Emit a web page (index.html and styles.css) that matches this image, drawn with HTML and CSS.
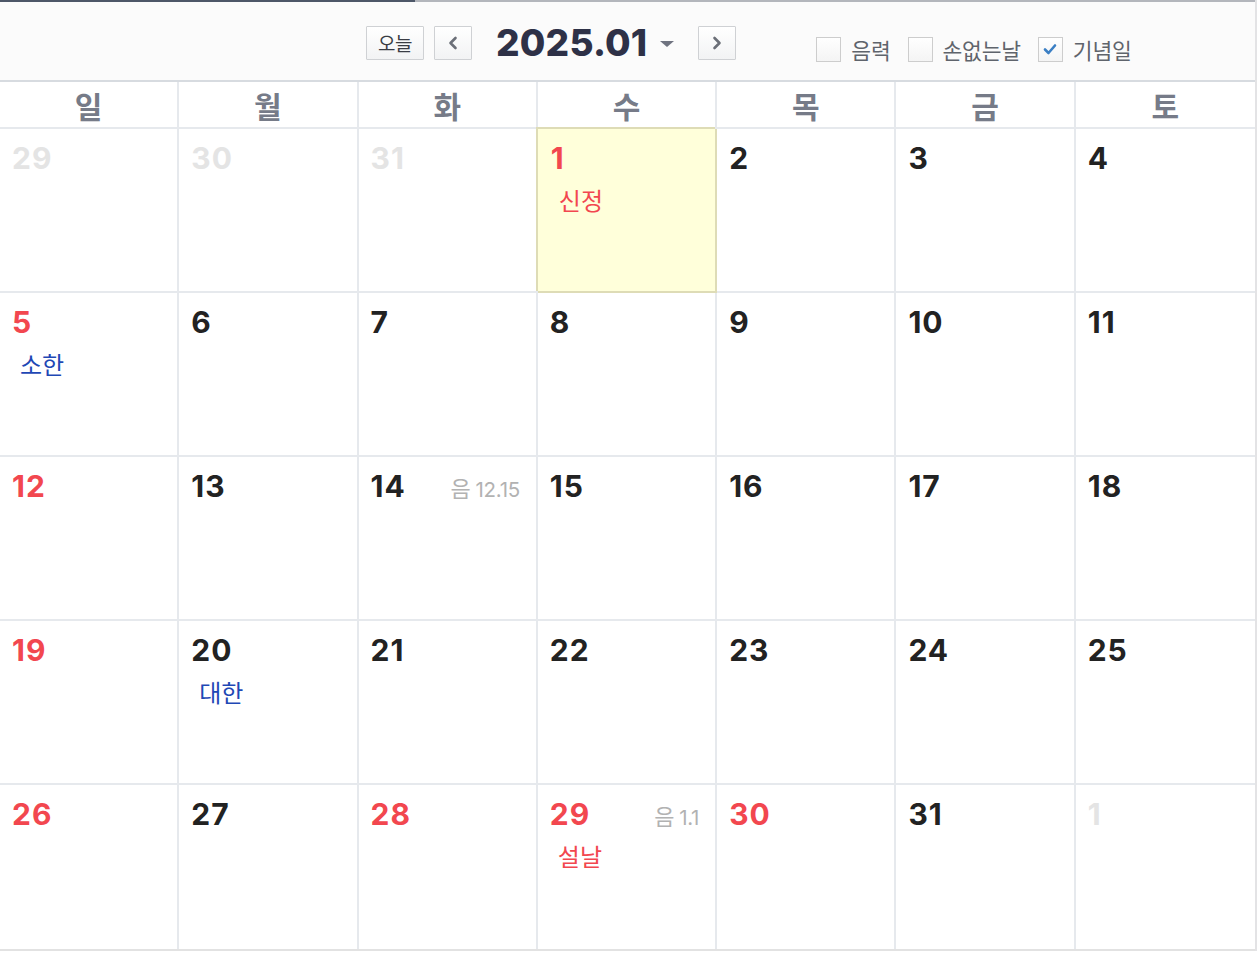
FILE: index.html
```html
<!DOCTYPE html>
<html lang="ko">
<head>
<meta charset="utf-8">
<title>2025.01</title>
<link rel="stylesheet" href="styles.css">
</head>
<body>
<div class="cal">
  <div class="topline"></div>
  <div class="header">
    <div class="nav">
      <button class="btn today-btn">오늘</button>
      <button class="btn arrow" aria-label="이전">
        <svg width="14" height="16" viewBox="0 0 14 16"><path d="M9.5 3 L4.5 8 L9.5 13" fill="none" stroke="#6b6f78" stroke-width="2.6" stroke-linecap="round" stroke-linejoin="round"/></svg>
      </button>
      <div class="title">2025.01<svg class="caret" width="16" height="10" viewBox="0 0 16 10"><path d="M1 2 H15 L8 8 Z" fill="#6f7380"/></svg></div>
      <button class="btn arrow" aria-label="다음">
        <svg width="14" height="16" viewBox="0 0 14 16"><path d="M4.5 3 L9.5 8 L4.5 13" fill="none" stroke="#6b6f78" stroke-width="2.6" stroke-linecap="round" stroke-linejoin="round"/></svg>
      </button>
    </div>
    <div class="opts">
      <label class="opt"><span class="box"></span>음력</label>
      <label class="opt"><span class="box"></span>손없는날</label>
      <label class="opt"><span class="box checked"><svg width="16" height="14" viewBox="0 0 16 14"><path d="M3 7.5 L6.5 11 L13 3.5" fill="none" stroke="#3b7fc4" stroke-width="2.6" stroke-linecap="round" stroke-linejoin="round"/></svg></span>기념일</label>
    </div>
  </div>
  <div class="weekdays">
    <div class="wd">일</div><div class="wd">월</div><div class="wd">화</div><div class="wd">수</div><div class="wd">목</div><div class="wd">금</div><div class="wd">토</div>
  </div>
  <div class="grid">
    <div class="cell"><div class="top"><span class="num other">29</span></div></div>
    <div class="cell"><div class="top"><span class="num other">30</span></div></div>
    <div class="cell"><div class="top"><span class="num other">31</span></div></div>
    <div class="cell today"><div class="top"><span class="num red">1</span></div><div class="label red">신정</div></div>
    <div class="cell"><div class="top"><span class="num">2</span></div></div>
    <div class="cell"><div class="top"><span class="num">3</span></div></div>
    <div class="cell"><div class="top"><span class="num">4</span></div></div>

    <div class="cell"><div class="top"><span class="num red">5</span></div><div class="label blue">소한</div></div>
    <div class="cell"><div class="top"><span class="num">6</span></div></div>
    <div class="cell"><div class="top"><span class="num">7</span></div></div>
    <div class="cell"><div class="top"><span class="num">8</span></div></div>
    <div class="cell"><div class="top"><span class="num">9</span></div></div>
    <div class="cell"><div class="top"><span class="num">10</span></div></div>
    <div class="cell"><div class="top"><span class="num">11</span></div></div>

    <div class="cell"><div class="top"><span class="num red">12</span></div></div>
    <div class="cell"><div class="top"><span class="num">13</span></div></div>
    <div class="cell"><div class="top"><span class="num">14</span><span class="lunar"><span class="lk">음</span>12.15</span></div></div>
    <div class="cell"><div class="top"><span class="num">15</span></div></div>
    <div class="cell"><div class="top"><span class="num">16</span></div></div>
    <div class="cell"><div class="top"><span class="num">17</span></div></div>
    <div class="cell"><div class="top"><span class="num">18</span></div></div>

    <div class="cell"><div class="top"><span class="num red">19</span></div></div>
    <div class="cell"><div class="top"><span class="num">20</span></div><div class="label blue">대한</div></div>
    <div class="cell"><div class="top"><span class="num">21</span></div></div>
    <div class="cell"><div class="top"><span class="num">22</span></div></div>
    <div class="cell"><div class="top"><span class="num">23</span></div></div>
    <div class="cell"><div class="top"><span class="num">24</span></div></div>
    <div class="cell"><div class="top"><span class="num">25</span></div></div>

    <div class="cell"><div class="top"><span class="num red">26</span></div></div>
    <div class="cell"><div class="top"><span class="num">27</span></div></div>
    <div class="cell"><div class="top"><span class="num red">28</span></div></div>
    <div class="cell"><div class="top"><span class="num red">29</span><span class="lunar"><span class="lk">음</span>1.1</span></div><div class="label red">설날</div></div>
    <div class="cell"><div class="top"><span class="num red">30</span></div></div>
    <div class="cell"><div class="top"><span class="num">31</span></div></div>
    <div class="cell"><div class="top"><span class="num other">1</span></div></div>
  </div>
</div>
</body>
</html>
```

FILE: styles.css
```css
* { box-sizing: border-box; }
html, body { margin: 0; padding: 0; background: #ffffff; }
body { font-family: "Inter", "Liberation Sans", "Noto Sans CJK KR", sans-serif; }

.cal {
  width: 1257px;
  border-right: 2px solid #e3e3e5;
}

.topline {
  height: 2px;
  background: linear-gradient(to right, #4d5768 0, #4d5768 415px, #b3b6bc 415px);
}

.header {
  height: 80px;
  background: #fbfbfb;
  border-bottom: 2px solid #d7dbe0;
  display: flex;
  align-items: flex-start;
  padding-left: 366px;
}

.nav {
  display: flex;
  align-items: center;
  height: 35px;
  margin-top: 23px;
}

.btn {
  height: 34px;
  border: 1px solid #cfd1d4;
  background: linear-gradient(#ffffff, #f2f3f4);
  border-radius: 1px;
  padding: 0;
  display: flex;
  align-items: center;
  justify-content: center;
  font-family: "Noto Sans CJK KR", sans-serif;
}
.today-btn {
  width: 58px;
  font-size: 19px;
  color: #3a3d44;
  letter-spacing: -0.5px;
}
.arrow { width: 38px; margin-left: 10px; }

.title {
  display: flex;
  align-items: center;
  margin: 0 13px 0 24px;
  font-family: "Inter", "Liberation Sans", sans-serif;
  font-weight: 800;
  font-size: 37px;
  letter-spacing: 0.2px;
  color: #2e3147;
  line-height: 1;
}
.caret { margin-left: 12px; margin-top: 2px; }

.opts {
  display: flex;
  align-items: center;
  margin-left: 80px;
  margin-top: 34px;
  height: 26px;
}
.opt {
  display: flex;
  align-items: center;
  font-family: "Noto Sans CJK KR", sans-serif;
  font-size: 21.5px;
  color: #5f646c;
  margin-right: 17px;
  letter-spacing: -0.2px;
}
.box {
  width: 25px;
  height: 25px;
  border: 1px solid #cdcdcd;
  background: linear-gradient(#ffffff, #f4f4f4);
  margin-right: 10px;
  display: flex;
  align-items: center;
  justify-content: center;
}

.weekdays {
  display: grid;
  grid-template-columns: repeat(7, 1fr);
  height: 47px;
  border-bottom: 2px solid #e6e9ed;
}
.wd {
  display: flex;
  align-items: center;
  justify-content: center;
  font-family: "Noto Sans CJK KR", sans-serif;
  font-weight: 700;
  font-size: 30px;
  color: #767b88;
  border-right: 2px solid #e6e9ed;
}
.wd:last-child { border-right: none; }

.grid {
  display: grid;
  grid-template-columns: repeat(7, 1fr);
  grid-auto-rows: 164px;
  border-bottom: 2px solid #e2e2e2;
}
.cell {
  border-right: 2px solid #e6e9ed;
  border-bottom: 2px solid #e6e9ed;
  padding: 11px 16px 0 12px;
}
.cell:nth-child(7n) { border-right: none; }
.cell:nth-last-child(-n+7) { border-bottom: none; }

.today {
  background: #ffffda;
  border-right-color: #dedcb6;
  border-bottom-color: #dedcb6;
  box-shadow: -2px -2px 0 0 #dedcb6;
  padding-left: 13px;
}

.top {
  display: flex;
  align-items: baseline;
  justify-content: space-between;
}
.num {
  font-family: "Inter", "Liberation Sans", sans-serif;
  font-weight: 700;
  font-size: 30px;
  line-height: 36px;
  color: #222222;
  letter-spacing: 1px;
}
.num.red { color: #f2474f; }
.num.other { color: #e4e4e4; }

.lunar {
  font-family: "Inter", "Liberation Sans", sans-serif;
  font-size: 20.5px;
  color: #b2b2b2;
  letter-spacing: -0.3px;
}
.lk {
  font-family: "Noto Sans CJK KR", sans-serif;
  font-size: 22px;
  margin-right: 5px;
}

.label {
  font-family: "Noto Sans CJK KR", sans-serif;
  font-size: 24px;
  line-height: 30px;
  margin: 9px 0 0 8px;
}
.label.red { color: #f2474f; }
.label.blue { color: #1f48b5; }
```
